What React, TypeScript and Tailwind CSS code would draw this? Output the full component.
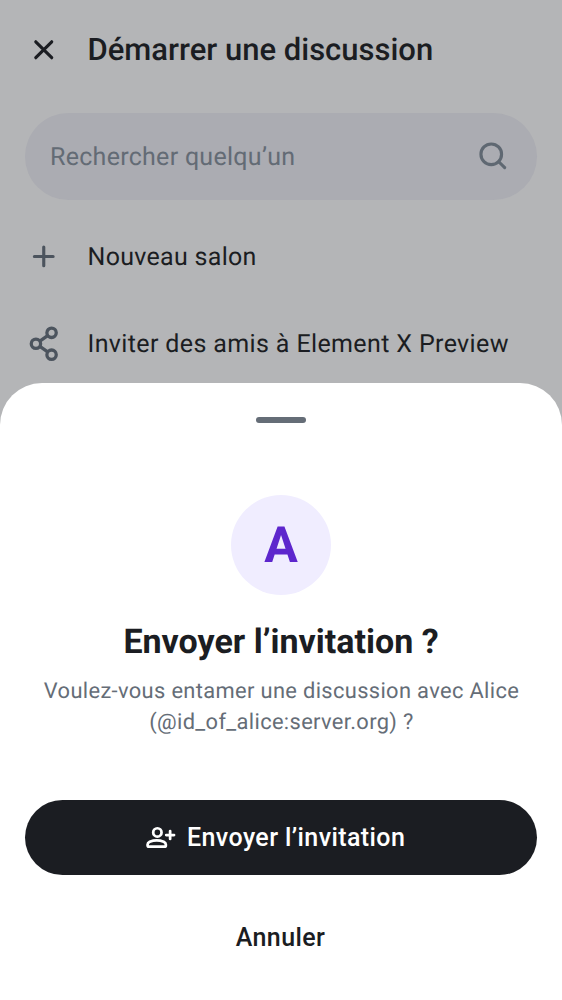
export default function App() {
  return (
    <div className="flex h-[1000px] w-[562px] flex-col overflow-hidden bg-[#b4b5b7] font-['Roboto',sans-serif] text-[#1b1d22] [text-rendering:geometricPrecision]">
      <header className="flex h-[100px] shrink-0 items-center pl-[25px]">
        <svg className="size-[37.5px]" viewBox="0 0 24 24" fill="none" stroke="#1b1d22" strokeWidth="2" strokeLinecap="round">
          <path d="M6.9 6.9 17.1 17.1M17.1 6.9 6.9 17.1" />
        </svg>
        <h1 className="ml-[25px] pt-px text-[31px] font-medium whitespace-nowrap">Démarrer une discussion</h1>
      </header>
      <div className="mx-[25px] mt-[13px] flex h-[87px] shrink-0 items-center justify-between rounded-full bg-[#abacb2] pr-[25px] pl-[25px]">
        <span className="pt-[2px] text-[25px] tracking-[0.28px] text-[#636b75]">Rechercher quelqu’un</span>
        <svg className="size-[37.5px]" viewBox="0 0 24 24" fill="none" stroke="#5f6872" strokeWidth="2" strokeLinecap="round">
          <circle cx="10.4" cy="10.4" r="6.6" />
          <path d="m15.2 15.2 3.8 3.8" />
        </svg>
      </div>
      <div className="mt-[13px] flex h-[87px] shrink-0 items-center pl-[25px]">
        <svg className="size-[37.5px]" viewBox="0 0 24 24" fill="none" stroke="#4c545e" strokeWidth="2" strokeLinecap="round">
          <path d="M6 11.8h12M12 5.8v12" />
        </svg>
        <span className="ml-[25px] pt-[2px] text-[25px] tracking-[0.3px]">Nouveau salon</span>
      </div>
      <div className="flex h-[83px] shrink-0 items-center pt-[4px] pl-[25px]">
        <svg className="size-[37.5px]" viewBox="0 0 24 24" fill="none" stroke="#4c545e" strokeWidth="2.1">
          <circle cx="7" cy="12" r="3" />
          <circle cx="17" cy="5" r="3" />
          <circle cx="17" cy="19" r="3" />
          <path d="m9.5 10.3 5-3.5M9.5 13.7l5 3.5" />
        </svg>
        <span className="ml-[25px] pt-[2px] text-[25px] tracking-[0.37px] whitespace-nowrap">Inviter des amis à Element X Preview</span>
      </div>
      <section className="flex flex-1 flex-col items-center rounded-t-[42px] bg-white px-[25px] pt-[34px]">
        <div className="h-[6.25px] w-[50px] shrink-0 rounded-full bg-[#656d77]" />
        <div className="mt-[71.75px] flex size-[100px] shrink-0 items-center justify-center rounded-full bg-[#f0edff] pt-[3px] text-[50px] font-bold text-[#5d26cd]">A</div>
        <h2 className="mt-[25px] text-[34px] leading-[44px] font-bold">Envoyer l’invitation ?</h2>
        <p className="mt-[12px] pl-px text-center text-[21.875px] leading-[31px] tracking-[0.35px] whitespace-nowrap text-[#656d77]">Voulez-vous entamer une discussion avec Alice<br />(@id_of_alice:server.org) ?</p>
        <button className="mt-[62px] flex h-[75px] w-full shrink-0 items-center justify-center rounded-full bg-[#1b1d22] pr-[12px] text-[25px] font-medium tracking-[0.4px] text-white">
          <svg className="mr-[11px] size-[31.25px]" viewBox="0 0 24 24" fill="none" stroke="white" strokeWidth="2.1" strokeLinecap="round">
            <circle cx="9.5" cy="8" r="3.2" />
            <path d="M2 17.2c0-1.1.6-1.6 1.6-2.1 3.8-1.5 7-1.5 10.8 0 1 .5 1.6 1 1.6 2.1V18q0 1-1 1H3q-1 0-1-1zM19.3 7v6M16.3 10h6" />
          </svg>
          Envoyer l’invitation
        </button>
        <button className="mt-[25px] h-[75px] pr-px text-[25px] font-medium tracking-[0.4px]">Annuler</button>
      </section>
    </div>
  );
}
